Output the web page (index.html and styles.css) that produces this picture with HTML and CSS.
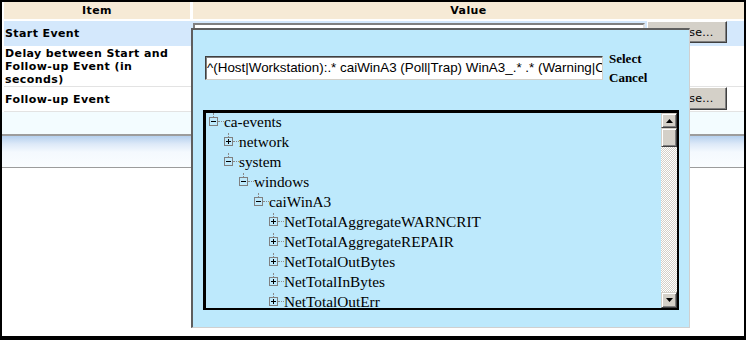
FILE: index.html
```html
<!DOCTYPE html>
<html>
<head>
<meta charset="utf-8">
<link rel="stylesheet" href="styles.css">
</head>
<body>
<div class="page">
  <div class="table">
    <div class="hdr">
      <div class="hcell">Item</div>
      <div class="hcell">Value</div>
    </div>
    <div class="row r1">
      <div class="name">Start Event</div>
      <div class="val"><span class="field"></span><button class="btn">Browse...</button></div>
    </div>
    <div class="row r2">
      <div class="name">Delay between Start and Follow-up Event (in seconds)</div>
      <div class="val"></div>
    </div>
    <div class="row r3">
      <div class="name">Follow-up Event</div>
      <div class="val"><span class="field"></span><button class="btn tall">Browse...</button></div>
    </div>
    <div class="row r4"></div>
  </div>
  <div class="band"></div>

  <div class="popup">
    <div class="top">
      <div class="regex">^(Host|Workstation):.* caiWinA3 (Poll|Trap) WinA3_.* .* (Warning|Critical)</div>
      <div class="actions">
        <span class="act">Select</span>
        <span class="act">Cancel</span>
      </div>
    </div>
    <div class="tree">
      <div class="nodes">
        <div class="node l0"><span class="tw"><span class="box minus"></span></span><span class="conn"></span><span class="lbl">ca-events</span></div>
        <div class="node l1"><span class="tw"><span class="box plus"></span></span><span class="conn"></span><span class="lbl">network</span></div>
        <div class="node l1"><span class="tw"><span class="box minus"></span></span><span class="conn"></span><span class="lbl">system</span></div>
        <div class="node l2"><span class="tw"><span class="box minus"></span></span><span class="conn"></span><span class="lbl">windows</span></div>
        <div class="node l3"><span class="tw"><span class="box minus"></span></span><span class="conn"></span><span class="lbl">caiWinA3</span></div>
        <div class="node l4"><span class="tw"><span class="box plus"></span></span><span class="conn"></span><span class="lbl">NetTotalAggregateWARNCRIT</span></div>
        <div class="node l4"><span class="tw"><span class="box plus"></span></span><span class="conn"></span><span class="lbl">NetTotalAggregateREPAIR</span></div>
        <div class="node l4"><span class="tw"><span class="box plus"></span></span><span class="conn"></span><span class="lbl">NetTotalOutBytes</span></div>
        <div class="node l4"><span class="tw"><span class="box plus"></span></span><span class="conn"></span><span class="lbl">NetTotalInBytes</span></div>
        <div class="node l4"><span class="tw"><span class="box plus"></span></span><span class="conn"></span><span class="lbl">NetTotalOutErr</span></div>
        <div class="node l4"><span class="tw"><span class="box plus"></span></span><span class="conn"></span><span class="lbl">NetTotalInErr</span></div>
      </div>
      <div class="sbar">
        <div class="sbtn up"><svg width="7" height="4" viewBox="0 0 7 4"><path d="M3.5 0 L7 4 L0 4 Z" fill="#000"/></svg></div>
        <div class="thumb"></div>
        <div class="track"></div>
        <div class="sbtn down"><svg width="7" height="4" viewBox="0 0 7 4"><path d="M0 0 L7 0 L3.5 4 Z" fill="#000"/></svg></div>
      </div>
    </div>
  </div>
</div>
</body>
</html>
```

FILE: styles.css
```css
html, body {
  margin: 0;
  padding: 0;
  background: #000;
}
body {
  width: 746px;
  height: 340px;
  overflow: hidden;
}
.page {
  position: relative;
  margin: 2px 0 0 2px;
  width: 742px;
  height: 334px;
  background: #fff;
  overflow: hidden;
  font-family: "DejaVu Sans", Verdana, sans-serif;
}
.table {
  padding-left: 2px;
}
.hdr {
  display: grid;
  grid-template-columns: 186px 1fr;
  column-gap: 3px;
  height: 17px;
  margin-bottom: 2px;
}
.hcell {
  background: #f6ead6;
  font-weight: bold;
  font-size: 11px;
  letter-spacing: 0.4px;
  line-height: 17px;
  text-align: center;
  color: #000;
}
.row {
  display: grid;
  grid-template-columns: 186px 1fr;
  column-gap: 3px;
  box-sizing: border-box;
}
.name {
  font-weight: bold;
  font-size: 11px;
  letter-spacing: 0.4px;
  line-height: 13px;
  color: #000;
  padding-left: 1px;
  display: flex;
  align-items: center;
}
.r1 {
  background: #d4e8fc;
  height: 25px;
}
.r2 {
  height: 41px;
  border-bottom: 1px solid #e3e3e3;
}
.r3 {
  height: 25px;
  border-bottom: 1px solid #e3e3e3;
}
.r4 {
  height: 22px;
  background: #f3fcff;
  margin-left: -2px;
}
.val {
  display: flex;
  align-items: flex-start;
  gap: 2px;
}
.field {
  width: 452px;
  height: 22px;
  margin-top: 2px;
  box-sizing: border-box;
  background: #fff;
  border: 2px solid;
  border-color: #808080 #e0e0e0 #e0e0e0 #808080;
}
.btn {
  width: 80px;
  height: 22px;
  margin: 0;
  padding: 0;
  box-sizing: border-box;
  background: #d4d0c8;
  border: 1px solid;
  border-color: #fff #404040 #404040 #fff;
  box-shadow: inset -1px -1px #808080;
  font-family: "DejaVu Sans", Verdana, sans-serif;
  font-size: 11px;
  letter-spacing: 0.3px;
  color: #000;
}
.btn.tall {
  height: 23px;
}
.band {
  height: 31px;
  border-top: 2px solid #9c9c9c;
  border-bottom: 1px solid #9c9c9c;
  background: linear-gradient(#b5d0ee 0px, #dde9f8 8px, #f4f9fe 16px, #fafdff 31px);
}

/* popup */
.popup {
  position: absolute;
  left: 189px;
  top: 26px;
  width: 499px;
  height: 300px;
  box-sizing: border-box;
  background: #bde9fc;
  border-left: 2px solid #5e5e5e;
  border-top: 2px solid #5e5e5e;
  border-right: 1px solid #d0d0d0;
  border-bottom: 1px solid #d0d0d0;
}
.top {
  display: flex;
  align-items: flex-start;
  padding: 19px 0 0 12px;
  gap: 6px;
}
.regex {
  width: 398px;
  height: 24px;
  margin-top: 7px;
  box-sizing: border-box;
  background: #fff;
  border: 1px solid;
  border-color: #404040 #d4d0c8 #d4d0c8 #404040;
  box-shadow: inset 1px 1px #808080;
  font-family: "Liberation Sans", Arial, sans-serif;
  font-size: 13.4px;
  line-height: 21px;
  padding-left: 1px;
  white-space: nowrap;
  overflow: hidden;
  color: #000;
}
.actions {
  display: flex;
  flex-direction: column;
}
.act {
  font-family: "Liberation Serif", "Times New Roman", serif;
  font-weight: bold;
  font-size: 13px;
  line-height: 19px;
  color: #000;
}
.tree {
  margin: 23px 0 0 10px;
  width: 476px;
  height: 200px;
  box-sizing: border-box;
  border-style: solid;
  border-color: #000;
  border-width: 3px 2px 2px 3px;
  display: flex;
}
.nodes {
  flex: 1;
  overflow: hidden;
  padding-left: 3px;
}
.node {
  display: flex;
  align-items: flex-start;
  height: 20px;
}
.l1 { padding-left: 15px; }
.l2 { padding-left: 30px; }
.l3 { padding-left: 45px; }
.l4 { padding-left: 60px; }
.tw {
  width: 9px;
  display: flex;
  flex-direction: column;
  align-items: center;
}
.tw::before {
  content: "";
  height: 4px;
  border-left: 1px dotted #8a8a8a;
}
.box {
  width: 7px;
  height: 7px;
  border: 1px solid #808080;
}
.minus {
  background: linear-gradient(#000, #000) center / 5px 1px no-repeat;
}
.plus {
  background:
    linear-gradient(#000, #000) center / 5px 1px no-repeat,
    linear-gradient(#000, #000) center / 1px 5px no-repeat;
}
.conn {
  width: 6px;
  height: 0;
  margin-top: 8px;
  border-top: 1px dotted #8a8a8a;
}
.lbl {
  font-family: "Liberation Serif", "Times New Roman", serif;
  font-size: 15.3px;
  line-height: 18px;
  white-space: nowrap;
  color: #000;
}
.sbar {
  width: 16px;
  display: flex;
  flex-direction: column;
}
.sbtn, .thumb {
  box-sizing: border-box;
  background: #d4d0c8;
  border: 1px solid;
  border-color: #d4d0c8 #404040 #404040 #d4d0c8;
  box-shadow: inset 1px 1px #fff, inset -1px -1px #808080;
  display: flex;
  align-items: center;
  justify-content: center;
}
.sbtn.up { height: 15px; }
.sbtn.down { height: 16px; }
.thumb { height: 19px; }
.track {
  flex: 1;
  background-color: #fff;
  background-image: repeating-conic-gradient(#d4d0c8 0% 25%, #fff 0% 50%);
  background-size: 2px 2px;
}
```
